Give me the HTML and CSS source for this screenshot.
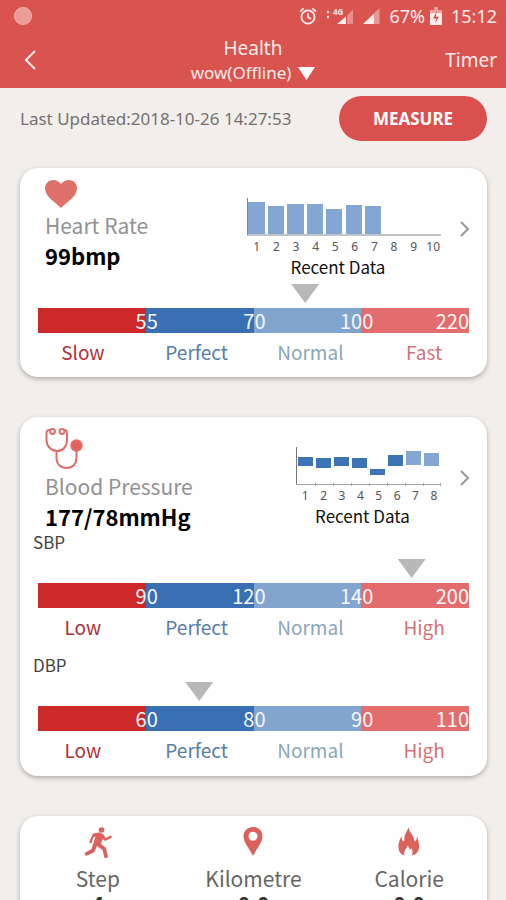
FILE: index.html
```html
<!DOCTYPE html>
<html lang="en">
<head>
<meta charset="utf-8">
<meta name="viewport" content="width=device-width, initial-scale=1">
<title>Health</title>
<link rel="stylesheet" href="styles.css">
</head>
<body>
<div class="app">
  <header class="top">
    <div class="status">
      <span class="bubble"></span>
      <svg class="alarm" viewBox="0 0 18 18" width="18" height="18" fill="none" stroke="currentColor" stroke-width="1.8"><circle cx="9" cy="10" r="6.6"/><path d="M9 6v4.3l3 1.8M1 4.6L4.6 1.3M17 4.6L13.4 1.3"/></svg>
      <svg class="signal" viewBox="0 0 29 18" width="29" height="18" fill="currentColor"><circle cx="3" cy="5" r="1.2"/><circle cx="3" cy="10" r="1.2"/><text class="net" x="8" y="8">4G</text><path d="M12 17L21 9.500V17z"/><path d="M22 8.500L28 2.500V17h-6z" opacity=".4"/></svg>
      <svg class="signal" viewBox="0 0 18 18" width="18" height="18" fill="currentColor"><path d="M1 17L12 6.500V17z"/><path d="M12 6.500L17.500 1v16H12z" opacity=".45"/></svg>
      <span class="percent">67%</span>
      <svg class="battery" viewBox="0 0 12 18" width="12" height="18"><path d="M4 0h4v3h4v15H0V3h4z" fill="currentColor" opacity=".5"/><path d="M0 6h12v12H0z" fill="currentColor"/><path d="M6.500 5L3 11.500h3L5.200 16 9 9.800H6z" fill="#d9534f"/></svg>
      <span>15:12</span>
    </div>
    <nav class="bar">
      <button class="back" type="button" aria-label="Back"><svg viewBox="0 0 12 20" width="12" height="20" fill="none" stroke="currentColor" stroke-width="2"><path d="M11 1L2 10l9 9"/></svg></button>
      <div class="heading">
        <h1>Health</h1>
        <button class="device" type="button">wow(Offline)<svg viewBox="0 0 17 13" width="17" height="13" fill="#fff"><path d="M0 0h17L8.500 13z"/></svg></button>
      </div>
      <a class="timer" href="#timer">Timer</a>
    </nav>
  </header>
  <main>
    <div class="update">
      <p>Last Updated:2018-10-26 14:27:53</p>
      <button class="measure" type="button">MEASURE</button>
    </div>

    <section class="card">
      <div class="summary">
        <div class="metric">
          <svg class="heart" viewBox="0 0 32 28" width="32" height="28" fill="#e0706c"><path d="M16 28C12 23.500 0 17 0 8.500 0 3.500 3.500 0 8.200 0 11.500 0 14.500 1.800 16 4c1.500-2.200 4.500-4 7.800-4C28.500 0 32 3.500 32 8.500 32 17 20 23.500 16 28z"/></svg>
          <h2>Heart Rate</h2>
          <strong>99bmp</strong>
        </div>
        <figure class="recent">
          <svg viewBox="0 0 196 40" width="196" height="40"><g fill="#83a7d2"><path d="M1 5h17v32H1zM21 9h16v28H21zM40 7h17v30H40zM60 7h16v30H60zM79 12h16v25H79zM99 8h16v29H99zM118 9h16v28h-16z"/></g><path d="M.5 1v37H194" fill="none" stroke="#808890"/></svg>
          <div class="ticks ten"><span>1</span><span>2</span><span>3</span><span>4</span><span>5</span><span>6</span><span>7</span><span>8</span><span>9</span><span>10</span></div>
          <figcaption>Recent Data</figcaption>
        </figure>
        <a class="more" href="#heart" aria-label="Heart rate details"><svg viewBox="0 0 9 16" width="9" height="16" fill="none" stroke="#999" stroke-width="2"><path d="M1 1l7 7-7 7"/></svg></a>
      </div>
      <div class="gauge">
        <div class="track"><i class="marker" style="left:62%"></i></div>
        <div class="scale"><span>55</span><span>70</span><span>100</span><span>220</span></div>
        <div class="names"><span>Slow</span><span>Perfect</span><span>Normal</span><span>Fast</span></div>
      </div>
    </section>

    <section class="card">
      <div class="summary">
        <div class="metric">
          <svg class="scope" viewBox="0 2 38 42" width="38" height="42" fill="none" stroke="#df6d6a" stroke-width="2"><circle cx="7.500" cy="4.500" r="2.400"/><circle cx="17" cy="4.500" r="2.400"/><path d="M5 3C2.500 2.500 1.500 4 1.500 7v6c0 6 4.500 11 10.700 11S22 19 22 13V7c0-3-1-4.500-3-4M11.500 24v7c0 6 4 10 10 10s10-4 10-10v-7"/><circle cx="31.500" cy="18.500" r="5.200" fill="#e8605e"/></svg>
          <h2>Blood Pressure</h2>
          <strong>177/78mmHg</strong>
        </div>
        <figure class="recent">
          <svg viewBox="0 0 147 40" width="147" height="40"><g fill="#3c74b5"><path d="M2 11h15v9H2zM20 12h15v10H20zM38 11h15v9H38zM56 12h15v10H56zM74 23h15v6H74zM92 9h15v11H92z"/></g><path d="M110 5h15v14h-15zM128 7h15v13h-15z" fill="#83a7d2"/><path d="M.5 1v38" stroke="#777"/><path d="M0 38.500h145M19.500 37v3M37.500 37v3M55.500 37v3M73.500 37v3M91.500 37v3M109.500 37v3M127.500 37v3M144.500 37v3" stroke="#a5a5a5"/></svg>
          <div class="ticks eight"><span>1</span><span>2</span><span>3</span><span>4</span><span>5</span><span>6</span><span>7</span><span>8</span></div>
          <figcaption>Recent Data</figcaption>
        </figure>
        <a class="more" href="#pressure" aria-label="Blood pressure details"><svg viewBox="0 0 9 16" width="9" height="16" fill="none" stroke="#999" stroke-width="2"><path d="M1 1l7 7-7 7"/></svg></a>
      </div>
      <h3>SBP</h3>
      <div class="gauge">
        <div class="track"><i class="marker" style="left:86.700%"></i></div>
        <div class="scale"><span>90</span><span>120</span><span>140</span><span>200</span></div>
        <div class="names"><span>Low</span><span>Perfect</span><span>Normal</span><span>High</span></div>
      </div>
      <h3>DBP</h3>
      <div class="gauge">
        <div class="track"><i class="marker" style="left:37.400%"></i></div>
        <div class="scale"><span>60</span><span>80</span><span>90</span><span>110</span></div>
        <div class="names"><span>Low</span><span>Perfect</span><span>Normal</span><span>High</span></div>
      </div>
    </section>

    <section class="card totals">
      <div class="total">
        <svg viewBox="0 0 28 30" width="28" height="30" fill="#dc605c"><circle cx="17.500" cy="3" r="2.800"/><path d="M9 6.500l6-1 4 1.500 2.500 4 5.500-2.500 1 2-7 3.500-2.500-2-1.500 5 5 4 2 9.500-3.500.5-2-8-5.500-4-2.500 6-8.500 4-1.500-3 7-4 2.500-7.500 1.500-5-2 .8-2 6-2.500-.8z"/></svg>
        <h2>Step</h2><strong>4</strong>
      </div>
      <div class="total">
        <svg viewBox="0 0 20 30" width="20" height="30" fill="#dc605c"><path fill-rule="evenodd" d="M10 0c5.400 0 9.500 4 9.500 9.300C19.500 15.500 13 22.500 10 29 7 22.500.5 15.500.5 9.300.5 4 4.600 0 10 0zm0 4.800a4.500 4.500 0 100 9 4.500 4.500 0 000-9z"/></svg>
        <h2>Kilometre</h2><strong>0.0</strong>
      </div>
      <div class="total">
        <svg viewBox="0 0 22 30" width="22" height="30" fill="#dc605c"><path d="M10.500 0c-1 5-5 7-4 13.500l-1 1C4 13.500 3.500 11.500 3.500 9 1.500 13 0 17 .5 21c.3 4 2.500 6.500 6 7.500-1.500-4.500 2-6.500 3.500-10.500 .5 3 1.500 3.500 2 5l1.500-2c1.500 3 1 5 .5 7.500 4-1 6.500-3.500 7-7.500.4-4-1-8-2-12 0 2-.5 4-1.500 5.500l-1.500-1c.5-5-5-7.500-5.500-13.500z"/></svg>
        <h2>Calorie</h2><strong>0.0</strong>
      </div>
    </section>
  </main>
</div>
</body>
</html>
```
FILE: styles.css
```css
* { box-sizing: border-box; }
body, h1, h2, h3, p, figure { margin: 0; }
body {
  background: #f1eeec;
  color: #111;
  font-family: "Noto Sans CJK SC", "Noto Sans", sans-serif;
}
h1, h2, h3 { font-weight: 400; }
svg { display: block; flex: none; overflow: visible; }
a { text-decoration: none; }
button { border: 0; padding: 0; background: none; color: inherit; font: inherit; }
.app { height: 100vh; display: flex; flex-direction: column; overflow: hidden; }

.top { flex: none; background: #d9534f; color: #fbeceb; font-family: "Noto Sans", sans-serif; }
.status { display: flex; align-items: center; height: 32px; padding: 0 9px 0 14px; font-size: 18px; line-height: 32px; }
.bubble { width: 18px; height: 18px; margin-right: auto; border-radius: 50%; background: #ec9b98; border: 1px solid #f2b7b4; }
.signal { margin-left: 8px; }
.net { font-size: 8px; font-weight: 700; }
.percent { margin: 0 5px 0 9px; }
.battery { margin-right: 9px; }
.bar { display: grid; grid-template-columns: 1fr auto 1fr; align-items: center; height: 56px; padding: 0 9px; }
.back { justify-self: start; margin-left: 15px; }
.heading { text-align: center; }
.heading h1 { font-size: 19px; line-height: 26px; }
.device { display: flex; align-items: center; gap: 7px; font-size: 17px; line-height: 24px; }
.timer { justify-self: end; color: inherit; font-size: 19px; }

main { flex: 1; min-height: 0; padding: 8px 19px 0 20px; overflow: hidden; }
.update { display: flex; align-items: center; justify-content: space-between; height: 45px; color: #77716e; font-family: "Noto Sans", sans-serif; font-size: 17px; }
.measure { width: 148px; height: 45px; border-radius: 24px; background: #d9504e; color: #fff; font-size: 17px; font-weight: 700; }

.card { margin-top: 40px; padding-bottom: 11px; border-radius: 18px; background: #fefefe; box-shadow: 0 2px 5px rgba(0, 0, 0, .28); }
.update + .card { margin-top: 27px; padding-bottom: 10px; }
.summary { display: flex; padding: 12px 18px 0 25px; }
.metric { flex: 1; }
.heart { margin-bottom: 2px; }
.metric h2 { color: #929292; font-size: 21px; line-height: 30px; }
.metric strong { display: block; margin-top: 1px; color: #000; font-size: 22px; font-weight: 700; line-height: 28px; }
.recent { margin-top: 17px; }
.ticks { display: grid; margin-top: 2px; text-align: center; color: #555; font-family: "Noto Sans", sans-serif; font-size: 12px; line-height: 16px; }
.ten { grid-template-columns: repeat(10, 1fr); }
.eight { grid-template-columns: repeat(8, 1fr); }
.recent figcaption { padding-right: 14px; font-size: 17px; line-height: 23px; text-align: center; }
.more { margin: 41px 0 0 17px; }
.card h3 { padding-left: 13px; color: #444; font-size: 17px; line-height: 23px; }
.gauge + h3 { margin-top: 11px; }

.gauge { margin-top: 6px; }
.track { position: relative; height: 24px; margin: 0 18px; }
.marker { position: absolute; top: 0; width: 28px; height: 19px; margin-left: -14px; background: #b8b8b8; clip-path: polygon(0 0, 100% 0, 50% 100%); }
.scale { display: grid; grid-template-columns: repeat(4, 1fr); height: 25px; margin: 0 18px; background: linear-gradient(90deg, #cc2928 25%, #3970b3 25% 50%, #82a5d0 50% 75%, #e26d6c 75%); color: #f7f7f7; font-size: 20px; line-height: 26px; text-align: right; }
.scale span { margin-right: -12px; }
.scale span:last-child { margin-right: 0; }
.names { display: grid; grid-template-columns: repeat(4, 1fr); margin: 4px 6px 0; font-size: 19px; line-height: 30px; text-align: center; }
.names :nth-child(1) { color: #b12f38; }
.names :nth-child(2) { color: #577fa6; }
.names :nth-child(3) { color: #8ba6bd; }
.names :nth-child(4) { color: #d47179; }

.totals { display: grid; grid-template-columns: repeat(3, 1fr); padding-top: 11px; }
.total { display: flex; flex-direction: column; align-items: center; }
.total h2 { margin-top: 6px; color: #666; font-size: 21px; line-height: 30px; }
.total strong { color: #333; font-size: 21px; font-weight: 700; line-height: 20px; }
```
